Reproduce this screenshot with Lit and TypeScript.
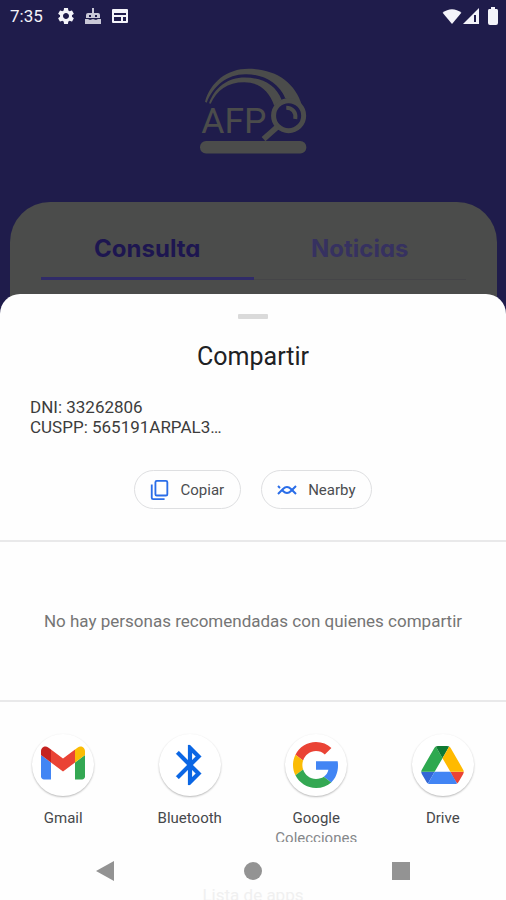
import { LitElement, html, css, svg } from "lit";
import { customElement } from "lit/decorators.js";

const gmail = svg`
  <svg class="logo" viewBox="50 35 92 88" width="46" height="44" aria-hidden="true">
    <path fill="#4285f4" d="M58 108h14V74L52 59v43c0 3.32 2.69 6 6 6"/>
    <path fill="#34a853" d="M120 108h14c3.32 0 6-2.69 6-6V59l-20 15"/>
    <path fill="#fbbc04" d="M120 48v26l20-15v-8c0-7.42-8.47-11.65-14.4-7.2"/>
    <path fill="#ea4335" d="M72 74V48l24 18 24-18v26L96 92"/>
    <path fill="#c5221f" d="M52 51v8l20 15V48l-5.6-4.2c-5.94-4.45-14.4-.22-14.4 7.2"/>
  </svg>`;

const bluetooth = svg`
  <svg class="logo" viewBox="0 0 24 24" width="48" height="48" aria-hidden="true">
    <path fill="#0b66e4" stroke="#0b66e4" stroke-width=".1" d="M17.71 7.71L12 2h-1v7.59L6.41 5 5 6.41 10.59 12 5 17.59 6.41 19 11 14.41V22h1l5.71-5.71-4.3-4.29 4.3-4.29zM13 5.83l1.88 1.88L13 9.59V5.83zm1.88 10.46L13 18.17v-3.76l1.88 1.88z"/>
  </svg>`;

const google = svg`
  <svg class="logo" viewBox="0 0 48 48" width="46" height="46" aria-hidden="true">
    <path fill="#ea4335" d="M24 9.5c3.54 0 6.71 1.22 9.21 3.6l6.85-6.85C35.9 2.38 30.47 0 24 0 14.62 0 6.51 5.38 2.56 13.22l7.98 6.19C12.43 13.72 17.74 9.5 24 9.5z"/>
    <path fill="#4285f4" d="M46.98 24.55c0-1.57-.15-3.09-.38-4.55H24v9.02h12.94c-.58 2.96-2.26 5.48-4.78 7.18l7.73 6c4.51-4.18 7.09-10.36 7.09-17.65z"/>
    <path fill="#fbbc05" d="M10.53 28.59c-.48-1.45-.76-2.99-.76-4.59s.27-3.14.76-4.59l-7.98-6.19C.92 16.46 0 20.12 0 24c0 3.88.92 7.54 2.56 10.78l7.97-6.19z"/>
    <path fill="#34a853" d="M24 48c6.48 0 11.93-2.13 15.89-5.81l-7.73-6c-2.15 1.45-4.92 2.3-8.16 2.3-6.26 0-11.57-4.22-13.47-9.91l-7.98 6.19C6.51 42.62 14.62 48 24 48z"/>
  </svg>`;

const drive = svg`
  <svg class="logo" viewBox="0 0 87.3 78" width="43" height="38" aria-hidden="true">
    <path fill="#3367d6" d="m6.6 66.85 3.85 6.65c.8 1.4 1.95 2.5 3.3 3.3l13.75-23.8h-27.5c0 1.55.4 3.1 1.2 4.5z"/>
    <path fill="#2da94f" d="m43.65 25-13.75-23.8c-1.35.8-2.5 1.9-3.3 3.3l-25.4 44a9.06 9.06 0 0 0 -1.2 4.5h27.5z"/>
    <path fill="#ea4335" d="m73.55 76.8c1.35-.8 2.5-1.9 3.3-3.3l1.6-2.75 7.65-13.25c.8-1.4 1.2-2.95 1.2-4.5h-27.502l5.852 11.5z"/>
    <path fill="#0f7a33" d="m43.65 25 13.75-23.8c-1.35-.8-2.9-1.2-4.5-1.2h-18.5c-1.6 0-3.15.45-4.5 1.2z"/>
    <path fill="#4285f4" d="m59.8 53h-32.3l-13.75 23.8c1.35.8 2.9 1.2 4.5 1.2h50.8c1.6 0 3.15-.45 4.5-1.2z"/>
    <path fill="#ffba00" d="m73.4 26.5-12.7-22c-.8-1.4-1.95-2.5-3.3-3.3l-13.75 23.8 16.15 28h27.45c0-1.55-.4-3.1-1.2-4.5z"/>
  </svg>`;

const apps = [
  { name: "Gmail", logo: gmail },
  { name: "Bluetooth", logo: bluetooth },
  { name: "Google", detail: "Colecciones", logo: google },
  { name: "Drive", logo: drive },
];

@customElement("status-bar")
export class StatusBar extends LitElement {
  static styles = css`
    :host {
      display: flex;
      align-items: center;
      height: 32px;
      padding: 0 7px 0 10px;
      color: #f4f4fa;
      font: 17px/20px Roboto, sans-serif;
    }
    svg { display: block; fill: currentColor; }
    .notes { display: flex; align-items: center; gap: 8px; flex: 1; margin-left: 13px; }
    .signals { display: flex; align-items: center; gap: 1px; }
    .battery { margin-left: 7px; }
    .soft { opacity: 0.8; }
  `;

  render() {
    return html`
      <time>7:35</time>
      <div class="notes">
        <svg viewBox="0 0 24 24" width="20" height="20"><path d="M19.14 12.94c.04-.3.06-.61.06-.94 0-.32-.02-.64-.07-.94l2.03-1.58c.18-.14.23-.41.12-.61l-1.92-3.32c-.12-.22-.37-.29-.59-.22l-2.39.96c-.5-.38-1.03-.7-1.62-.94l-.36-2.54c-.04-.24-.24-.41-.48-.41h-3.84c-.24 0-.43.17-.47.41l-.36 2.54c-.59.24-1.13.57-1.62.94l-2.39-.96c-.22-.08-.47 0-.59.22L2.74 8.87c-.12.21-.08.47.12.61l2.03 1.58c-.05.3-.09.63-.09.94s.02.64.07.94l-2.03 1.58c-.18.14-.23.41-.12.61l1.92 3.32c.12.22.37.29.59.22l2.39-.96c.5.38 1.03.7 1.62.94l.36 2.54c.05.24.24.41.48.41h3.84c.24 0 .44-.17.47-.41l.36-2.54c.59-.24 1.13-.56 1.62-.94l2.39.96c.22.08.47 0 .59-.22l1.92-3.32c.12-.22.07-.47-.12-.61l-2.01-1.58zM12 15.6c-1.98 0-3.6-1.62-3.6-3.6s1.62-3.6 3.6-3.6 3.6 1.62 3.6 3.6-1.62 3.6-3.6 3.6z"/></svg>
        <svg class="soft" viewBox="0 0 18 18" width="18" height="18"><path fill-rule="evenodd" d="M8 1h2v5h4a2 2 0 0 1 2 2v3H2V8a2 2 0 0 1 2-2h4zM5 8v2h2V8zm6 0v2h2V8zM1 12h3l2 1 3-1 3 1 2-1h3v5H1z"/></svg>
        <svg viewBox="0 0 20 20" width="20" height="20"><path fill-rule="evenodd" d="M3 3h14a1 1 0 0 1 1 1v12a1 1 0 0 1-1 1H3a1 1 0 0 1-1-1V4a1 1 0 0 1 1-1zM4 7v2h12V7zM4 11v4h7v-4zM13 11v4h3v-4z"/></svg>
      </div>
      <div class="signals">
        <svg viewBox="0 0 20 16" width="20" height="15"><path d="M0 4C6-1 14-1 20 4L10 16z"/></svg>
        <svg viewBox="0 0 16 16" width="16" height="16"><path fill-rule="evenodd" d="M0 16 16 0V16zM11 7v7h2V7z"/></svg>
        <svg class="battery" viewBox="0 0 12 18" width="12" height="18"><path d="M4 0h4v2h2a2 2 0 0 1 1 2v12a2 2 0 0 1-2 2H3a2 2 0 0 1-2-2V4a2 2 0 0 1 1-2h2z"/></svg>
      </div>
    `;
  }
}

@customElement("share-sheet")
export class ShareSheet extends LitElement {
  static styles = css`
    :host {
      display: flex;
      flex-direction: column;
      background: #fefefe;
      border-radius: 20px 20px 0 0;
      color: #202124;
      font-family: Roboto, sans-serif;
    }
    button { font: inherit; color: inherit; background: none; border: 0; padding: 0; }
    h2, p { margin: 0; font-weight: 400; }
    .handle { align-self: center; width: 30px; height: 5px; margin-top: 20px; border-radius: 1px; background: #dadada; }
    h2 { margin-top: 22px; text-align: center; font-size: 25px; line-height: 32px; }
    .preview { margin: 24px 30px 0; font-size: 17px; line-height: 20px; color: #3c3c3c; white-space: pre-line; }
    .actions { display: flex; justify-content: center; gap: 20px; padding: 33px 0 31px; }
    .chip {
      display: flex;
      align-items: center;
      gap: 10px;
      height: 39px;
      padding: 0 16px 0 14px;
      border: 1px solid #dedfe1;
      border-radius: 20px;
      font-size: 15px;
      color: #4b4d50;
    }
    .people {
      padding: 67px 24px;
      border: solid #e9e9ea;
      border-width: 2px 0;
      text-align: center;
      font-size: 17px;
      line-height: 24px;
      color: #757575;
    }
    .apps {
      display: grid;
      grid-template-columns: repeat(4, 1fr);
      height: 140px;
      overflow: hidden;
    }
    .app { display: flex; flex-direction: column; align-items: center; padding-top: 32px; font-size: 15px; line-height: 20px; color: #46484b; }
    .disc {
      display: grid;
      place-items: center;
      width: 62px;
      height: 62px;
      margin-bottom: 12px;
      border-radius: 50%;
      background: #fff;
      box-shadow: 0 1px 2px rgba(0, 0, 0, 0.28);
    }
    .detail { color: #85878a; }
  `;

  render() {
    return html`
      <div class="handle"></div>
      <h2>Compartir</h2>
      <p class="preview">DNI: 33262806
CUSPP: 565191ARPAL3…</p>
      <div class="actions">
        <button class="chip">
          <svg viewBox="0 0 24 24" width="22" height="22" fill="none" stroke="#2a6de8" stroke-width="2" aria-hidden="true">
            <rect x="7" y="2" width="13" height="16" rx="1.500"/>
            <path d="M3 6v14.500a1.500 1.500 0 0 0 1.500 1.500H17"/>
          </svg>
          Copiar
        </button>
        <button class="chip">
          <svg viewBox="0 0 22 22" width="22" height="22" fill="none" stroke="#2a6de8" stroke-width="2" aria-hidden="true">
            <path d="M2 15l5-5c2-2 5-3 8 0l5 5"/>
            <path d="M6 11l1 1c3 3 6 2 8 0l5-5"/>
            <path d="M2 7l2 2"/>
          </svg>
          Nearby
        </button>
      </div>
      <p class="people">No hay personas recomendadas con quienes compartir</p>
      <div class="apps">
        ${apps.map(
          (app) => html`
            <button class="app">
              <span class="disc">${app.logo}</span>
              <span>${app.name}</span>
              ${app.detail ? html`<span class="detail">${app.detail}</span>` : ""}
            </button>
          `
        )}
      </div>
    `;
  }
}

@customElement("app-root")
export class AppRoot extends LitElement {
  static styles = css`
    :host {
      display: flex;
      flex-direction: column;
      min-height: 100vh;
      background: #1f1c4b;
      font-family: Roboto, sans-serif;
    }
    .brand { align-self: center; display: block; margin: 36px 0 48px; }
    .card {
      margin: 0 9px 0 10px;
      padding: 19px 31px 48px;
      border-radius: 40px 40px 0 0;
      background: #4b4c4b;
    }
    .tabs { display: grid; grid-template-columns: 1fr 1fr; }
    .tab {
      height: 59px;
      padding: 0 0 2px;
      border: 0;
      border-bottom: 1px solid #454548;
      background: none;
      font: 700 24px/32px Inter, sans-serif;
      font-feature-settings: "cv11";
      color: #363160;
    }
    .tab.active { padding-bottom: 0; border-bottom: 3px solid #302b68; color: #1d1650; }
    .sheet { margin-top: -34px; }
    .nav {
      flex: 1;
      display: grid;
      grid-template-columns: repeat(3, 1fr);
      grid-template-rows: 20px 24px;
      justify-items: center;
      row-gap: 2px;
      height: 39px;
      padding: 19px 6% 0;
      overflow: hidden;
      background: #fefefe;
    }
    .key { display: block; padding: 0; border: 0; background: none; }
    .key svg { display: block; fill: #939393; }
    .list-title { grid-column: 1 / -1; margin: 0; font-size: 17px; line-height: 24px; color: #f0f0f0; }
  `;

  render() {
    return html`
      <status-bar></status-bar>
      <svg class="brand" viewBox="60 40 320 256" width="107" height="86" role="img" aria-label="AFP">
        <path fill="#4b4c4b" d="M75 140C92 82 140 42 205 42c80 0 140 40 160 110l-50-22C296 84 248 57 195 58 142 58 100 92 80 143z"/>
        <path fill="#4b4c4b" d="M87 145C104 98 142 68 194 68c54 0 92 22 110 66l-22 18C266 106 236 82 192 82c-50 0-82 24-100 64z"/>
        <circle cx="325" cy="182" r="45" fill="#1f1c4b" stroke="#4b4c4b" stroke-width="15"/>
        <path fill="none" stroke="#4b4c4b" stroke-width="12" d="M318 158c18 0 30 14 27 34"/>
        <path fill="none" stroke="#4b4c4b" stroke-width="17" d="M293 214l-43 38"/>
        <rect x="60" y="258" width="318" height="37" rx="18" fill="#4b4c4b"/>
        <text x="64" y="235" font-family="Roboto, sans-serif" font-size="106" fill="#4b4c4b">AFP</text>
      </svg>
      <section class="card">
        <div class="tabs" role="tablist">
          <button class="tab active" role="tab" aria-selected="true">Consulta</button>
          <button class="tab" role="tab" aria-selected="false">Noticias</button>
        </div>
      </section>
      <share-sheet class="sheet"></share-sheet>
      <nav class="nav">
        <button class="key" aria-label="Atrás"><svg viewBox="0 0 20 20" width="20" height="20"><path d="M19 0v20L1 10z"/></svg></button>
        <button class="key" aria-label="Inicio"><svg viewBox="0 0 20 20" width="20" height="20"><circle cx="10" cy="10" r="9"/></svg></button>
        <button class="key" aria-label="Recientes"><svg viewBox="0 0 20 20" width="20" height="20"><path d="M1 1h18v18H1z"/></svg></button>
        <p class="list-title">Lista de apps</p>
      </nav>
    `;
  }
}
